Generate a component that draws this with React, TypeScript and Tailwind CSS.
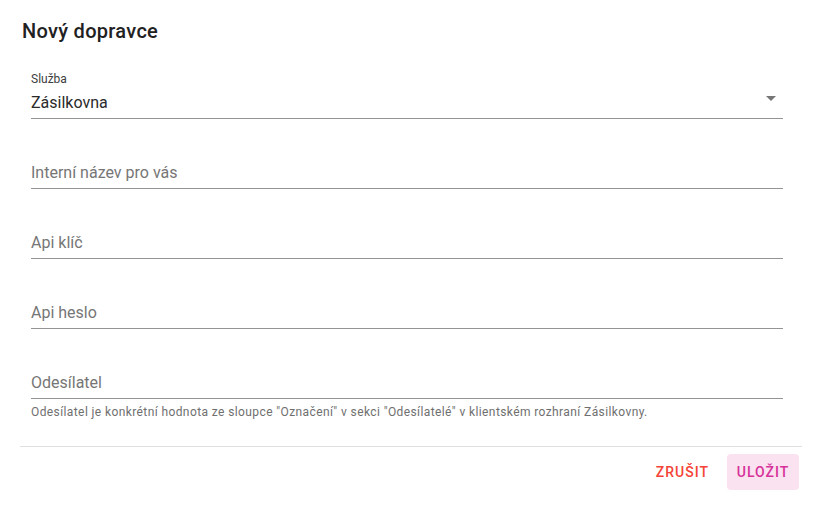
import type { ReactNode } from "react";

function Field({
  label,
  value,
  helper,
  select,
}: {
  label: string;
  value?: string;
  helper?: string;
  select?: boolean;
}) {
  const filled = Boolean(value);
  return (
    <div className="flex w-[752px] flex-col">
      <div className="h-[16px] text-[12px] leading-[16px] text-[#3d3d3d]">{filled ? label : ""}</div>
      <div className="relative flex h-[32px] items-start border-b border-[#949494] pt-[4px] text-[16px] leading-[23px]">
        {filled ? (
          <span className="text-[#2a2a2a]">{value}</span>
        ) : (
          <span className="text-[#767676]">{label}</span>
        )}
        {select && (
          <svg className="absolute right-0 top-[-1px] h-[24px] w-[24px]" viewBox="0 0 24 24" fill="#767676">
            <path d="M7 10l5 5 5-5z" />
          </svg>
        )}
      </div>
      {helper && (
        <p className="mt-[3px] text-[12px] leading-[20px] tracking-[0.4px] text-[#6f6f6f]">{helper}</p>
      )}
    </div>
  );
}

function TextButton({ children, className }: { children: ReactNode; className: string }) {
  return (
    <button
      type="button"
      className={`flex h-[36px] items-center justify-center rounded-[4px] text-[14px] font-medium uppercase leading-[24px] tracking-[1px] ${className}`}
    >
      {children}
    </button>
  );
}

export default function App() {
  return (
    <div className="flex h-[513px] w-[822px] flex-col bg-white font-['Roboto','Liberation_Sans',sans-serif]">
      <h2 className="pl-[22px] pt-[15px] text-[20px] font-medium leading-[32px] tracking-[0.3px] text-[#212121]">
        Nový dopravce
      </h2>

      <div className="mt-[24px] flex flex-col gap-[22px] pl-[31px]">
        <Field label="Služba" value="Zásilkovna" select />
        <Field label="Interní název pro vás" />
        <Field label="Api klíč" />
        <Field label="Api heslo" />
        <Field
          label="Odesílatel"
          helper={'Odesílatel je konkrétní hodnota ze sloupce "Označení" v sekci "Odesílatelé" v klientském rozhraní Zásilkovny.'}
        />
      </div>

      <div className="ml-[20px] mt-[24px] h-px w-[782px] bg-[#e0e0e0]" />

      <div className="flex justify-end gap-[10px] pr-[23px] pt-[7px]">
        <TextButton className="px-[8px] text-[#f44336]">Zrušit</TextButton>
        <TextButton className="w-[72px] bg-[#fae2f0] text-[#d7319a]">Uložit</TextButton>
      </div>
    </div>
  );
}
